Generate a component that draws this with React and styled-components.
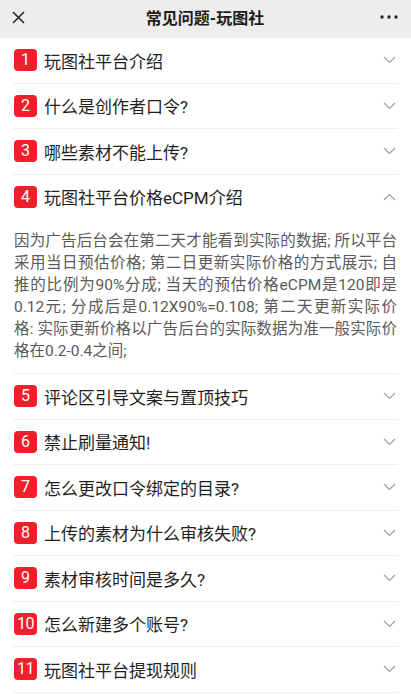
import React from 'react';
import styled, { createGlobalStyle } from 'styled-components';

const Global = createGlobalStyle`
  body {
    margin: 0;
    background: #ffffff;
    font-family: Roboto, "Noto Sans CJK SC", "Noto Sans", sans-serif;
    -webkit-font-smoothing: antialiased;
  }
`;

const Header = styled.div`
  height: 38px;
  box-sizing: border-box;
  padding: 0 13px 4px 12px;
  background: #ededed;
  display: flex;
  align-items: center;
  justify-content: space-between;
`;

const Title = styled.div`
  font-size: 16px;
  font-weight: 700;
  color: #1c1c1c;
`;

const IconBox = styled.div`
  width: 20px;
  display: flex;
  align-items: center;
  justify-content: ${(p) => (p.right ? 'flex-end' : 'flex-start')};
`;

const List = styled.div`
  padding: 0 13px;
`;

const Item = styled.div`
  border-bottom: 1px solid #efefef;
`;

const Row = styled.div`
  height: 44.5px;
  display: flex;
  align-items: center;
  padding-left: 1px;
`;

const Badge = styled.span`
  flex: none;
  width: 23px;
  height: 22px;
  border-radius: 4px;
  background: #ef1f2b;
  color: #fff;
  font-size: 16px;
  line-height: 22px;
  text-align: center;
  letter-spacing: ${(p) => (p.wide ? '-0.5px' : '0')};
  margin-right: 7px;
`;

const Name = styled.span`
  flex: 1;
  font-size: 17px;
  color: #1f1f1f;
`;

const Chevron = styled.svg`
  flex: none;
  width: 13px;
  height: 8px;
  margin-right: 2px;
`;

const Body = styled.div`
  padding: 11px 1px 11px 1px;
  font-size: 15.5px;
  line-height: 22px;
  color: #5a5a5a;
`;

const Line = styled.div`
  text-align: justify;
  text-align-last: ${(p) => (p.last ? 'left' : 'justify')};
  white-space: nowrap;
`;

const items = [
  '玩图社平台介绍',
  '什么是创作者口令?',
  '哪些素材不能上传?',
  '玩图社平台价格eCPM介绍',
  '评论区引导文案与置顶技巧',
  '禁止刷量通知!',
  '怎么更改口令绑定的目录?',
  '上传的素材为什么审核失败?',
  '素材审核时间是多久?',
  '怎么新建多个账号?',
  '玩图社平台提现规则',
];

const detail = [
  '因为广告后台会在第二天才能看到实际的数据; 所以平台',
  '采用当日预估价格; 第二日更新实际价格的方式展示; 自',
  '推的比例为90%分成; 当天的预估价格eCPM是120即是',
  '0.12元; 分成后是0.12X90%=0.108; 第二天更新实际价',
  '格: 实际更新价格以广告后台的实际数据为准一般实际价',
  '格在0.2-0.4之间;',
];

const Arrow = ({ up }) => (
  <Chevron viewBox="0 0 13 8">
    <path
      d={up ? 'M1 7 L6.5 1.5 L12 7' : 'M1 1 L6.5 6.5 L12 1'}
      fill="none"
      stroke="#9a9a9a"
      strokeWidth="1.1"
    />
  </Chevron>
);

export default function App() {
  return (
    <>
      <Global />
      <Header>
        <IconBox>
          <svg width="13" height="13" viewBox="0 0 13 13">
            <path d="M1 1 L12 12 M12 1 L1 12" stroke="#222" strokeWidth="1.5" />
          </svg>
        </IconBox>
        <Title>常见问题-玩图社</Title>
        <IconBox right>
          <svg width="18" height="4" viewBox="0 0 18 4">
            <circle cx="2" cy="2" r="1.7" fill="#222" />
            <circle cx="9" cy="2" r="1.7" fill="#222" />
            <circle cx="16" cy="2" r="1.7" fill="#222" />
          </svg>
        </IconBox>
      </Header>
      <List>
        {items.map((t, i) => (
          <Item key={t}>
            <Row>
              <Badge wide={i >= 9}>{i + 1}</Badge>
              <Name>{t}</Name>
              <Arrow up={i === 3} />
            </Row>
            {i === 3 && (
              <Body>
                {detail.map((l, j) => (
                  <Line key={j} last={j === detail.length - 1}>
                    {l}
                  </Line>
                ))}
              </Body>
            )}
          </Item>
        ))}
      </List>
    </>
  );
}
